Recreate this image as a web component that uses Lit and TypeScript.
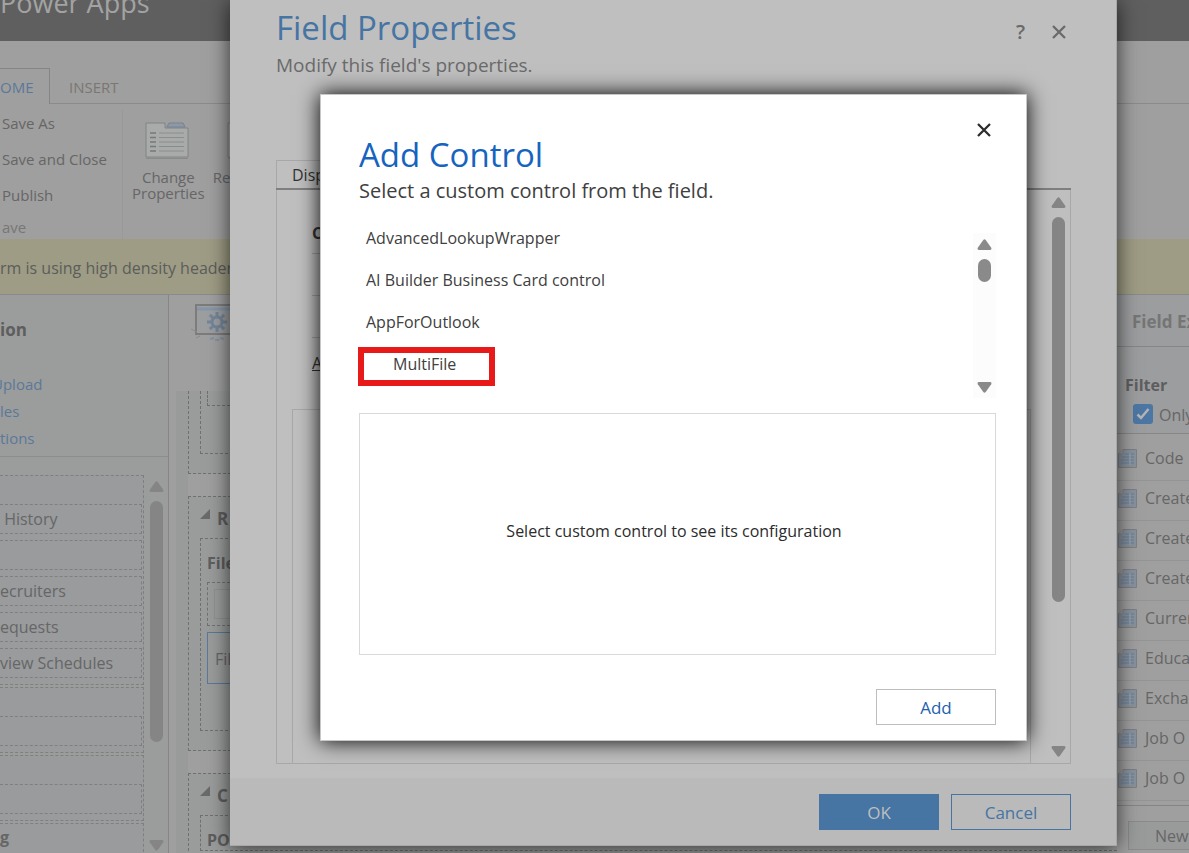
import { LitElement, html, css, svg } from "lit";
import { customElement, property } from "lit/decorators.js";
import { classMap } from "lit/directives/class-map.js";

/** A slim scroll track: arrow, rounded thumb, arrow. */
@customElement("scroll-rail")
class ScrollRail extends LitElement {
  /** Share of the track that the thumb takes, in percent. */
  @property({ type: Number }) share = 50;

  static styles = css`
    :host {
      display: flex;
      flex-direction: column;
      align-items: center;
      color: #858585;
    }
    svg {
      display: block;
      flex: none;
      width: 15px;
      height: 11px;
      fill: currentColor;
    }
    .track {
      flex: 1;
      width: 13px;
      padding: 9px 0;
      min-height: 0;
    }
    .thumb {
      border-radius: 7px;
      background: currentColor;
    }
  `;

  render() {
    return html`
      <svg viewBox="0 0 15 11" aria-hidden="true">
        <path d="M6.3 .9 Q7.5 -.5 8.7 .9 L14.2 8.7 Q15 10.8 13.2 11 H1.8 Q0 10.8 .8 8.7Z" />
      </svg>
      <div class="track"><div class="thumb" style="height:${this.share}%"></div></div>
      <svg viewBox="0 0 15 11" aria-hidden="true">
        <path d="M6.3 10.1 Q7.5 11.5 8.7 10.1 L14.2 2.3 Q15 .2 13.2 0 H1.8 Q0 .2 .8 2.3Z" />
      </svg>
    `;
  }
}

const cross = svg`<path d="M1 1 L13 13 M13 1 L1 13" fill="none" stroke="currentColor" stroke-width="2.300" />`;

/** The form editor that lies, dimmed, behind the dialogs. */
@customElement("form-editor")
class FormEditor extends LitElement {
  static styles = css`
    :host {
      display: flex;
      flex-direction: column;
      height: 100%;
      overflow: hidden;
      background: #9f9f9f;
      color: #666;
      font-size: 16px;
      line-height: 20px;
    }
    * {
      box-sizing: border-box;
    }
    a {
      color: #5c7899;
      text-decoration: none;
    }
    button {
      font: inherit;
      color: inherit;
      background: none;
      border: 0;
      padding: 0;
      text-align: left;
      white-space: nowrap;
    }
    .top {
      flex: none;
      display: flex;
      align-items: flex-end;
      height: 41px;
      padding-bottom: 18px;
      background: #5f5f5f;
      color: #a3a3a3;
      font-size: 27px;
      line-height: 40px;
    }
    .cut {
      margin-left: -8px;
    }
    .tabs {
      flex: none;
      display: flex;
      height: 63px;
      padding-top: 27px;
      border-bottom: 1px solid #8b8b8b;
      font-size: 15px;
    }
    .tab {
      height: 36px;
      padding: 2px 15px 0 0;
      margin-right: 19px;
      color: #7a7671;
    }
    .tab.on {
      width: 50px;
      border: solid #858585;
      border-width: 1px 1px 0 0;
      background: #9f9f9f;
      color: #5c7899;
      padding-top: 1px;
    }
    .ribbon {
      flex: none;
      display: flex;
      height: 135px;
      font-size: 15px;
    }
    .file {
      display: flex;
      flex-direction: column;
      gap: 16px;
      width: 123px;
      margin-top: 6px;
      padding: 3px 0 0 2px;
      border-right: 1px solid #999;
    }
    .caption {
      display: block;
      margin-top: -4px;
      color: #777;
    }
    .tools {
      display: flex;
      gap: 8px;
      padding: 17px 0 0 9px;
      line-height: 16px;
    }
    .tool {
      display: flex;
      flex-direction: column;
      align-items: center;
      gap: 8px;
      text-align: center;
    }
    .tool.wide {
      width: 74px;
      text-align: left;
    }
    .wide span {
      align-self: stretch;
    }
    .tool svg {
      width: 46px;
      height: 40px;
    }
    .notice {
      flex: none;
      height: 56px;
      padding-top: 19px;
      background: #9e9c84;
      border-bottom: 1px solid #8a8a8a;
      color: #5c5c5c;
      white-space: nowrap;
    }
    .body {
      flex: 1;
      min-height: 0;
      display: flex;
    }
    .nav {
      flex: none;
      display: flex;
      flex-direction: column;
      width: 169px;
      border-right: 1px solid #868686;
      background: #9a9d9c;
    }
    .links {
      display: flex;
      flex-direction: column;
      gap: 7px;
      height: 162px;
      padding-top: 25px;
      border-bottom: 1px solid #8c8c8c;
      font-size: 15px;
    }
    h2,
    h3 {
      margin: 0;
      font-size: 17px;
      line-height: 20px;
      color: #5e5e5e;
    }
    .links h2 {
      margin-bottom: 27px;
    }
    .tree {
      flex: 1;
      min-height: 0;
      display: flex;
      gap: 5px;
      padding-top: 18px;
    }
    .groups {
      flex: 1;
      display: flex;
      flex-direction: column;
      gap: 2px;
      font-size: 16px;
      overflow: hidden;
    }
    .group {
      flex: none;
      display: flex;
      flex-direction: column;
      gap: 6px;
      padding: 28px 1px 6px 0;
      border: 1px dashed #7f7f7f;
      border-left: 0;
      background: #999b9d;
    }
    .row {
      height: 30px;
      padding: 4px 0;
      border: 1px dashed #7f7f7f;
      border-left: 0;
      white-space: pre;
    }
    .group.bold {
      padding-top: 3px;
      height: 60px;
      font-weight: 700;
    }
    .tree scroll-rail {
      width: 19px;
      padding: 6px 5px 2px 0;
    }
    .canvas {
      flex: 1;
      min-width: 0;
      display: flex;
      flex-direction: column;
      padding-left: 7px;
    }
    .record {
      flex: none;
      height: 96px;
      padding: 8px 0 0 15px;
    }
    .record svg {
      width: 48px;
      height: 42px;
    }
    .sections {
      flex: 1;
      min-height: 0;
      overflow: hidden;
      display: flex;
      flex-direction: column;
      gap: 22px;
      padding-left: 12px;
      background: linear-gradient(90deg, #989b99 12px, #9f9f9f 12px);
    }
    .section {
      flex: none;
      border: 1px dashed #707070;
      border-right: 0;
      padding: 0 0 19px 11px;
      background: #9a9c9c;
    }
    .cell {
      border: 1px dashed #707070;
      border-right: 0;
      padding: 0 0 0 6px;
    }
    .section.first,
    .section.first .cell,
    .first .slot {
      border-top: 0;
    }
    .first .cell {
      padding-bottom: 47px;
    }
    .slot {
      height: 15px;
      border: 1px dashed #707070;
      border-right: 0;
    }
    .slot.tall {
      height: 44px;
      padding: 6px;
      margin: 9px 0 6px;
    }
    .slot.tall div {
      height: 30px;
      border: 1px solid #909090;
    }
    .picked {
      height: 52px;
      padding: 16px 7px;
      border: 1px solid #5c7899;
      margin-bottom: 46px;
    }
    .head {
      display: flex;
      gap: 7px;
      padding: 12px 0 8px;
      height: 41px;
    }
    .head svg {
      width: 10px;
      height: 10px;
      fill: #6a6a6a;
    }
    .cell h3 {
      padding-top: 14px;
      font-size: 16px;
    }
    .explorer {
      flex: none;
      width: 72px;
      overflow: hidden;
      display: flex;
      flex-direction: column;
      white-space: nowrap;
      background: #9f9f9f;
      font-size: 16px;
    }
    .explorer h2 {
      height: 52px;
      padding: 17px 0 0 15px;
      border-bottom: 1px solid #868686;
      background: #9b9d9e;
      color: #757575;
    }
    .filter {
      display: flex;
      flex-direction: column;
      gap: 9px;
      height: 87px;
      padding: 28px 0 0 8px;
      border-bottom: 1px solid #868686;
      background: #9b9d9e;
    }
    .filter h3 {
      font-size: 16px;
    }
    .filter label {
      display: flex;
      gap: 6px;
      padding-left: 8px;
      line-height: 22px;
    }
    input {
      appearance: none;
      flex: none;
      width: 20px;
      height: 20px;
      margin: 0;
      border-radius: 3px;
      background: #4c76a3
        url("data:image/svg+xml,%3Csvg xmlns='http://www.w3.org/2000/svg' viewBox='0 0 20 20'%3E%3Cpath d='M4.500 10.500l3.500 3.500l7.500-9' fill='none' stroke='%23b4b4b4' stroke-width='2.500'/%3E%3C/svg%3E");
    }
    .fields {
      flex: 1;
      margin: 0;
      padding: 7px 0 0;
      list-style: none;
      min-height: 0;
    }
    .fields li {
      display: flex;
      align-items: center;
      gap: 8px;
      height: 40px;
      padding: 0 0 5px 1px;
      border-bottom: 1px solid #949494;
    }
    .fields svg {
      flex: none;
      width: 19px;
      height: 19px;
    }
    .new {
      flex: none;
      height: 48px;
      padding: 15px 0 0 11px;
      border-top: 1px solid #858585;
    }
    .new button {
      width: 72px;
      height: 29px;
      padding-left: 26px;
      border: 1px solid #8b8b8b;
      background: #999b9b;
    }
  `;

  private folder() {
    return html`<svg viewBox="2 1 46 40" aria-hidden="true">
      <path d="M3 3 H22 V8 H45 V37 H3Z" fill="#a9abab" stroke="#808284" />
      <path d="M24 7 L26 3 H40 L42 7Z" fill="#8c9aa8" stroke="#76828e" />
      <path d="M7 13h6M7 17.500h6M7 22h6M7 26.500h6M7 31h6" stroke="#76797c" stroke-width="1.500" />
      <path d="M16 13h25M16 17.500h25M16 22h25M16 26.500h25M16 31h25" stroke="#8a8d90" stroke-width="1" />
      <path d="M3 38.500H45" stroke="#8a8a8a" />
    </svg>`;
  }

  private sheet() {
    return html`<svg viewBox="0 0 19 19" aria-hidden="true">
      <path d="M5 .5H18.500V18.500H.5V5Z" fill="#8a929c" stroke="#7c8187" />
      <path d="M.5 5H5V.5" fill="#9c9fa2" stroke="#83878c" />
      <path d="M7 5h9M4 8h12M3 11h13M3 14h13" stroke="#6780a0" />
      <path d="M12 4v12" stroke="#9aa6b4" />
    </svg>`;
  }

  private corner() {
    return html`<svg viewBox="0 0 10 10" aria-hidden="true"><path d="M10 0V10H0Z" /></svg>`;
  }

  private group(rows: string[]) {
    return html`<div class="group">${rows.map((r) => html`<div class="row">${r}</div>`)}</div>`;
  }

  render() {
    const teeth = [0, 45, 90, 135, 180, 225, 270, 315];
    const fields = ["Code", "Create", "Create", "Create", "Curren", "Educa", "Exchan", "Job O", "Job O"];
    return html`
      <div class="top"><span>Power Apps</span></div>
      <div class="tabs">
        <button class="tab on">OME</button>
        <button class="tab">INSERT</button>
      </div>
      <div class="ribbon">
        <div class="file">
          <button>Save As</button>
          <button>Save and Close</button>
          <button>Publish</button>
          <span class="caption">ave</span>
        </div>
        <div class="tools">
          <button class="tool">${this.folder()}<span>Change<br />Properties</span></button>
          <button class="tool wide">${this.folder()}<span>Re</span></button>
        </div>
      </div>
      <div class="notice">rm is using high density header.</div>
      <div class="body">
        <div class="nav">
          <div class="links">
            <h2>ion</h2>
            <a class="cut" href="#">Upload</a>
            <a href="#">les</a>
            <a href="#">tions</a>
          </div>
          <div class="tree">
            <div class="groups">
              ${this.group([" History", "", "ecruiters", "equests", "view Schedules"])}
              ${this.group([""])} ${this.group([""])}
              <div class="group bold">g</div>
            </div>
            <scroll-rail share="73"></scroll-rail>
          </div>
        </div>
        <div class="canvas">
          <div class="record">
            <svg viewBox="0 0 48 42" aria-hidden="true">
              <path d="M5 2H47V31H5Z" fill="#9c9ea0" stroke="#7c7c7c" stroke-width="2" />
              <path d="M6 6H47" stroke="#8496a8" stroke-width="3" />
              <path d="M0 26l6 3M5 35l4-2" stroke="#8a8a8a" />
              <g stroke="#74869a" stroke-width="3">
                ${teeth.map((a) => svg`<path d="M26 9V13" transform="rotate(${a} 26 19)" />`)}
              </g>
              <circle cx="26" cy="19" r="5" fill="none" stroke="#74869a" stroke-width="3" />
              <path d="M19 36l4-1M24 37h4M29 35l4 1" stroke="#8292a3" stroke-width="2" />
            </svg>
          </div>
          <div class="sections">
            <div class="section first">
              <div class="cell"><div class="slot"></div></div>
            </div>
            <div class="section">
              <div class="head">${this.corner()}<h3>R</h3></div>
              <div class="cell">
                <h3>File</h3>
                <div class="slot tall"><div></div></div>
                <div class="picked">Fil</div>
              </div>
            </div>
            <div class="section">
              <div class="head">${this.corner()}<h3>C</h3></div>
              <div class="cell"><h3>PO</h3></div>
            </div>
          </div>
        </div>
        <div class="explorer">
          <h2>Field Ex</h2>
          <div class="filter">
            <h3>Filter</h3>
            <label><input type="checkbox" checked />Only</label>
          </div>
          <ul class="fields">
            ${fields.map((f) => html`<li>${this.sheet()}<span>${f}</span></li>`)}
          </ul>
          <div class="new"><button>New</button></div>
        </div>
      </div>
    `;
  }
}

@customElement("app-root")
class AppRoot extends LitElement {
  static styles = css`
    :host {
      display: block;
      position: relative;
      height: 100vh;
      overflow: hidden;
      font-family: "Open Sans", "Noto Sans", sans-serif;
    }
    *,
    *::after {
      box-sizing: border-box;
    }
    h1,
    h2,
    p {
      margin: 0;
      font-weight: 400;
    }
    button {
      font: inherit;
      padding: 0;
      background: none;
      border: 0;
      color: inherit;
    }
    .layer {
      position: absolute;
      inset: 0;
      display: flex;
      justify-content: center;
      align-items: flex-start;
      padding-left: 158px;
    }
    .properties {
      display: flex;
      flex-direction: column;
      width: 887px;
      height: calc(100% - 7px);
      background: #bfbfbf;
      border: solid #a8a8a8;
      border-width: 0 1px 1px 0;
      box-shadow: 0 2px 20px rgba(0, 0, 0, 0.7);
      color: #6a6a6a;
    }
    .bar {
      display: flex;
      justify-content: space-between;
      height: 160px;
      padding: 4px 50px 0 46px;
    }
    h1,
    h2 {
      font-size: 33px;
      line-height: 45px;
    }
    .properties h1 {
      color: #4674a3;
      line-height: 47px;
    }
    .sub {
      font-size: 20px;
      line-height: 28px;
    }
    .bar .sub {
      font-size: 19px;
    }
    .icons {
      display: flex;
      align-items: flex-start;
      gap: 27px;
      padding-top: 18px;
      font-size: 20px;
      font-weight: 600;
      line-height: 20px;
    }
    .icons button {
      height: 20px;
    }
    .x svg {
      display: block;
      width: 14px;
      height: 14px;
    }
    .pane {
      flex: 1;
      min-height: 0;
      display: flex;
      flex-direction: column;
      margin: 0 45px 0 46px;
      color: #333;
      font-size: 16px;
    }
    .strip {
      display: flex;
      height: 30px;
      border-bottom: 2px solid #7f7f7f;
    }
    .strip button {
      padding: 0 15px;
      border: solid #a8a8a8;
      border-width: 1px 1px 0;
    }
    .content {
      flex: 1;
      min-height: 0;
      display: flex;
      border: 1px solid #a8a8a8;
      border-top: 0;
    }
    .grid {
      flex: 1;
      display: flex;
      flex-direction: column;
      padding-left: 15px;
    }
    .lines {
      height: 219px;
      padding: 31px 20px 0 20px;
      line-height: 24px;
    }
    .line {
      height: 42px;
      border-bottom: 1px solid #a0a0a0;
    }
    .line.top {
      height: 33px;
      font-weight: 700;
    }
    .lines a {
      display: block;
      padding-top: 13px;
      color: inherit;
    }
    .config {
      flex: 1;
      border: solid #a8a8a8;
      border-width: 1px 1px 0;
    }
    .content scroll-rail {
      width: 39px;
      padding: 7px 0 6px 15px;
    }
    .foot {
      display: flex;
      justify-content: flex-end;
      gap: 12px;
      margin-top: 14px;
      padding: 16px 45px 15px;
      background: #bababa;
    }
    .push {
      width: 120px;
      height: 36px;
      border: 1px solid #4674a3;
      color: #4674a3;
      font-size: 17px;
    }
    .push.main {
      background: #4674a3;
      color: #bfbfbf;
    }
    .add {
      display: flex;
      flex-direction: column;
      width: 707px;
      margin-top: 94px;
      padding: 28px 30px 15px 38px;
      background: #fff;
      border: 1px solid #c8c8c8;
      box-shadow: 0 0 20px #000;
      color: #404040;
    }
    .add .x {
      align-self: flex-end;
      margin-right: 5px;
      color: #2d2d2d;
    }
    .add h2 {
      margin-top: -5px;
      color: #1664c0;
    }
    .chooser {
      display: flex;
      margin-top: 12px;
    }
    .controls {
      flex: 1;
      margin: 0;
      padding: 0;
      list-style: none;
      font-size: 16px;
      line-height: 42px;
    }
    .controls li {
      position: relative;
      height: 42px;
      padding-left: 7px;
    }
    .controls .marked {
      padding-left: 34px;
    }
    .marked::after {
      content: "";
      position: absolute;
      left: -1px;
      top: 4px;
      width: 137px;
      height: 39px;
      border: 6px solid #e81919;
      pointer-events: none;
    }
    .chooser scroll-rail {
      width: 23px;
      margin-top: 16px;
      padding: 6px 0 5px;
      background: #fcfcfc;
      color: #8a8a8a;
      height: 165px;
    }
    .preview {
      display: flex;
      align-items: center;
      justify-content: center;
      height: 242px;
      margin-top: 15px;
      padding: 0 7px 6px 0;
      border: 1px solid #d9d9d9;
      color: #2c2c2c;
      font-size: 16px;
    }
    .add .push {
      align-self: flex-end;
      margin-top: 34px;
      border-color: #bdbdbd;
      color: #1e5fae;
    }
  `;

  render() {
    const controls = ["AdvancedLookupWrapper", "AI Builder Business Card control", "AppForOutlook", "MultiFile"];
    return html`
      <form-editor></form-editor>
      <div class="layer">
        <section class="properties" role="dialog" aria-label="Field Properties">
          <div class="bar">
            <div>
              <h1>Field Properties</h1>
              <p class="sub">Modify this field's properties.</p>
            </div>
            <div class="icons">
              <button aria-label="Help">?</button>
              <button class="x" aria-label="Close"><svg viewBox="0 0 14 14">${cross}</svg></button>
            </div>
          </div>
          <div class="pane">
            <div class="strip"><button>Display</button></div>
            <div class="content">
              <div class="grid">
                <div class="lines">
                  <div class="line top">C</div>
                  <div class="line"></div>
                  <div class="line"></div>
                  <a href="#">A</a>
                </div>
                <div class="config"></div>
              </div>
              <scroll-rail share="74"></scroll-rail>
            </div>
          </div>
          <div class="foot">
            <button class="push main">OK</button>
            <button class="push">Cancel</button>
          </div>
        </section>
      </div>
      <div class="layer">
        <section class="add" role="dialog" aria-label="Add Control">
          <button class="x" aria-label="Close"><svg viewBox="0 0 14 14">${cross}</svg></button>
          <h2>Add Control</h2>
          <p class="sub">Select a custom control from the field.</p>
          <div class="chooser">
            <ul class="controls">
              ${controls.map((c) => html`<li class=${classMap({ marked: c === "MultiFile" })}><button>${c}</button></li>`)}
            </ul>
            <scroll-rail share="20"></scroll-rail>
          </div>
          <div class="preview">Select custom control to see its configuration</div>
          <button class="push">Add</button>
        </section>
      </div>
    `;
  }
}
